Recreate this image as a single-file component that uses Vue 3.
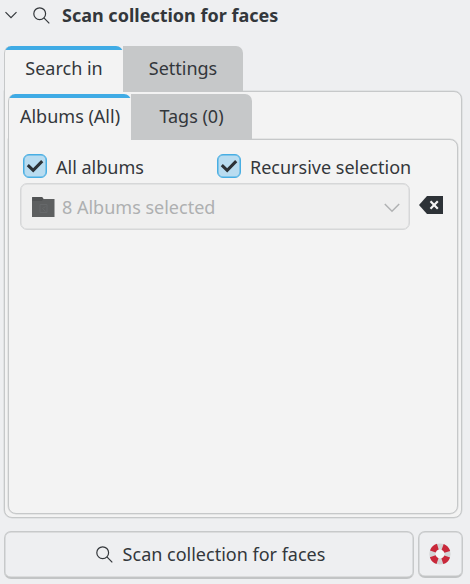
<script setup>
import { ref } from 'vue'

const mainTabs = ['Search in', 'Settings']
const scopeTabs = ['Albums (All)', 'Tags (0)']
const mainTab = ref(0)
const scopeTab = ref(0)
const allAlbums = ref(true)
const recursive = ref(true)
</script>

<template>
  <main class="sidebar">
    <header class="title">
      <svg class="chevron" width="12" height="8" viewBox="0 0 12 8"><path d="M.5 1.200 6 6.700l5.500-5.500" /></svg>
      <svg class="search" width="17" height="17" viewBox="0 0 17 17"><circle cx="6.700" cy="6.700" r="5.900" /><path d="m10.900 10.900 5.400 5.400" /></svg>
      <h1>Scan collection for faces</h1>
    </header>

    <nav class="tabs main-tabs">
      <button v-for="(t, i) in mainTabs" :key="t" class="tab" :class="{ active: mainTab === i }" @click="mainTab = i">{{ t }}</button>
    </nav>
    <section class="panel outer">
      <nav class="tabs scope-tabs">
        <button v-for="(t, i) in scopeTabs" :key="t" class="tab" :class="{ active: scopeTab === i }" @click="scopeTab = i">{{ t }}</button>
      </nav>
      <section class="panel inner">
        <div class="checks">
          <label class="check" @click="allAlbums = !allAlbums">
            <span class="box"><svg v-if="allAlbums" width="18" height="14" viewBox="0 0 18 14"><path d="m1.800 6.200 5.400 5.200 9-9.300" /></svg></span>
            <span>All albums</span>
          </label>
          <label class="check" @click="recursive = !recursive">
            <span class="box"><svg v-if="recursive" width="18" height="14" viewBox="0 0 18 14"><path d="m1.800 6.200 5.400 5.200 9-9.300" /></svg></span>
            <span>Recursive selection</span>
          </label>
        </div>
        <div class="select-row">
          <div class="combo">
            <svg width="23" height="20" viewBox="0 0 23 20">
              <path fill="#5d5f60" d="M.5 0h9.500l1.500 2H22.500v18H0V.5z" />
              <path fill="#515354" d="M.5 0h9.500l1.500 2-1.700 2H.3z" />
              <path fill="none" stroke="#66686a" d="M8 7.500h7v8H8zM13.500 9.500l-3 2 3 3" />
            </svg>
            <span class="combo-text">8 Albums selected</span>
            <svg class="drop" width="16" height="10" viewBox="0 0 16 10"><path d="m.8 1 7.200 7.300L15.200 1" /></svg>
          </div>
          <svg class="clear" width="24" height="18" viewBox="0 0 24 18">
            <path fill="#2d3237" d="M8 0h16v18H8L0 9z" />
            <path fill="none" stroke="#f5f5f5" stroke-width="2.200" d="m11.500 5.300 7.300 7.400m0-7.400-7.300 7.400" />
          </svg>
        </div>
      </section>
    </section>

    <footer class="actions">
      <button class="btn scan">
        <svg class="search" width="17" height="17" viewBox="0 0 17 17"><circle cx="6.700" cy="6.700" r="5.900" /><path d="m10.900 10.900 5.400 5.400" /></svg>
        <span>Scan collection for faces</span>
      </button>
      <button class="btn help" aria-label="Help">
        <svg width="22" height="22" viewBox="0 0 22 22">
          <circle cx="11" cy="11" r="5" fill="#f6f7f7" />
          <circle cx="11" cy="11" r="7.600" fill="none" stroke="#d3d5d6" stroke-width="6" />
          <circle cx="11" cy="11" r="7.600" fill="none" stroke="#c9283a" stroke-width="6" stroke-dasharray="7 4.938" stroke-dashoffset="-2.469" />
        </svg>
      </button>
    </footer>
  </main>
</template>

<style>
body { background: #eeeff1; overflow: hidden; }
</style>

<style scoped>
* { box-sizing: border-box; }
.sidebar {
  width: 470px;
  height: 584px;
  padding-left: 4px;
  background: #eeeff1;
  color: #33373b;
  font: 18px/24px "Noto Sans", sans-serif;
}
button { font: inherit; color: inherit; border: 0; margin: 0; padding: 0; white-space: nowrap; }
svg { flex: none; display: block; }
.title { display: flex; align-items: center; height: 46px; padding: 0 0 16px 1px; }
h1 { margin: 0 0 0 12px; font-size: 18px; line-height: 24px; white-space: nowrap; }
.chevron, .search { fill: none; stroke: #33373b; stroke-width: 1.200; }
.title .search { margin-left: 16px; }
.tabs { display: flex; position: relative; z-index: 1; }
.tab { height: 46px; width: 120px; background: #c6c8c9; border-radius: 0 7px 0 0; padding-bottom: 2px; }
.tab.active {
  height: 47px;
  width: 119px;
  background: linear-gradient(#3fabe5 0 4px, #f3f3f3 4px);
  border-left: 1px solid #c6c8c9;
  border-radius: 7px 7px 0 0;
  padding-bottom: 3px;
}
.main-tabs { height: 45px; }
.scope-tabs { height: 45px; }
.scope-tabs .tab { width: 121px; }
.scope-tabs .tab.active { width: 123px; }
.panel { border: 1px solid #c6c8c9; box-shadow: 0 0 0 .5px #c6c8c999; background: #f3f3f3; }
.outer { width: 458px; height: 427px; border-radius: 0 8px 8px 8px; padding: 2px 3px 3px; }
.inner { width: 450px; height: 375px; border-radius: 0 8px 8px 8px; padding: 14px 0 0 11px; }
.checks { display: grid; grid-template-columns: 194px 1fr; padding-left: 3px; height: 29px; }
.check { display: flex; align-items: flex-start; gap: 9px; height: 26px; white-space: nowrap; }
.check > span:last-child { margin-top: 1px; }
.box { width: 24px; height: 24px; border: 1px solid #48aee3; box-shadow: inset 0 0 0 .5px #48aee3; border-radius: 6px; background: #b9dcf0; display: grid; place-items: center; flex: none; }
.box path { fill: none; stroke: #2d3237; stroke-width: 3; }
.select-row { display: flex; align-items: flex-start; gap: 9px; }
.combo { display: flex; align-items: center; width: 390px; height: 47px; border: 1px solid #d6d7d8; box-shadow: inset 0 0 0 .5px #d6d7d8; border-radius: 7px; background: #efefef; padding: 0 9px 0 11px; color: #aeb0b1; }
.combo-text { margin: 0 auto 0 7px; }
.drop { fill: none; stroke: #b0b2b3; stroke-width: 1.500; margin-top: 2px; }
.clear { margin-top: 13px; }
.actions { display: flex; gap: 4px; margin-top: 13px; }
.btn { display: flex; align-items: center; justify-content: center; border: 1px solid #c7c9ca; border-bottom: 2px solid #c2c4c5; box-shadow: inset 0 0 0 .5px #c7c9ca; border-radius: 7px; background: #eeeff1; }
.scan { width: 410px; height: 48px; gap: 10px; padding: 0 0 1px 3px; }
.help { width: 45px; height: 47px; padding-right: 2px; }
</style>
